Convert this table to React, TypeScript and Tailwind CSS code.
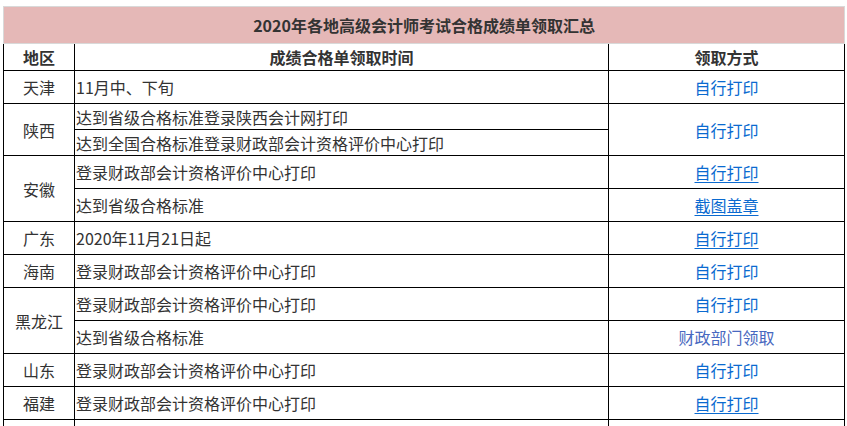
import React from "react";

type Way = { text: string; underline?: boolean; muted?: boolean };
type Sub = { time: string; way?: Way; h: number };
type Region = { name: string; subs: Sub[]; way?: Way };

const data: Region[] = [
  { name: "天津", subs: [{ time: "11月中、下旬", way: { text: "自行打印" }, h: 33 }] },
  {
    name: "陕西",
    way: { text: "自行打印" },
    subs: [
      { time: "达到省级合格标准登录陕西会计网打印", h: 26 },
      { time: "达到全国合格标准登录财政部会计资格评价中心打印", h: 26 },
    ],
  },
  {
    name: "安徽",
    subs: [
      { time: "登录财政部会计资格评价中心打印", way: { text: "自行打印", underline: true }, h: 33 },
      { time: "达到省级合格标准", way: { text: "截图盖章", underline: true }, h: 33 },
    ],
  },
  { name: "广东", subs: [{ time: "2020年11月21日起", way: { text: "自行打印", underline: true }, h: 33 }] },
  { name: "海南", subs: [{ time: "登录财政部会计资格评价中心打印", way: { text: "自行打印" }, h: 33 }] },
  {
    name: "黑龙江",
    subs: [
      { time: "登录财政部会计资格评价中心打印", way: { text: "自行打印" }, h: 33 },
      { time: "达到省级合格标准", way: { text: "财政部门领取", muted: true }, h: 33 },
    ],
  },
  { name: "山东", subs: [{ time: "登录财政部会计资格评价中心打印", way: { text: "自行打印" }, h: 33 }] },
  { name: "福建", subs: [{ time: "登录财政部会计资格评价中心打印", way: { text: "自行打印", underline: true }, h: 33 }] },
  { name: "", subs: [{ time: "", way: { text: "" }, h: 33 }] },
];

const cell = "border border-black p-0 align-middle";

const WayText = ({ way }: { way: Way }) => (
  <span
    className={`${way.muted ? "text-[#4868c0]" : "text-[#0a6ad0]"} ${
      way.underline ? "underline underline-offset-[3px]" : ""
    }`}
  >
    {way.text}
  </span>
);

export default function App() {
  return (
    <div
      className="bg-white w-[847px] h-[426px] overflow-hidden pt-[6px] pl-[3px] text-[16px] leading-none text-[#333]"
      style={{ fontFamily: '"Noto Sans CJK SC", "Microsoft YaHei", sans-serif' }}
    >
      <table className="border-collapse table-fixed w-[841px]">
        <colgroup>
          <col className="w-[71px]" />
          <col className="w-[534px]" />
          <col className="w-[236px]" />
        </colgroup>
        <tbody>
          <tr>
            <td
              colSpan={3}
              className="border border-[#d9d9d9] bg-[#e5b8b7] h-[37px] text-center font-bold text-[16px] p-0 pb-[1px]"
            >
              2020年各地高级会计师考试合格成绩单领取汇总
            </td>
          </tr>
          <tr>
            <td className={`${cell} h-[27px] text-center font-bold`}>地区</td>
            <td className={`${cell} text-center font-bold`}>成绩合格单领取时间</td>
            <td className={`${cell} text-center font-bold`}>领取方式</td>
          </tr>
          {data.map((r, ri) =>
            r.subs.map((s, si) => (
              <tr key={`${ri}-${si}`}>
                {si === 0 && (
                  <td rowSpan={r.subs.length} className={`${cell} text-center`}>
                    {r.name}
                  </td>
                )}
                <td className={`${cell} pl-[1px]`} style={{ height: s.h }}>
                  {s.time}
                </td>
                {s.way ? (
                  <td className={`${cell} text-center`}>
                    <WayText way={s.way} />
                  </td>
                ) : (
                  si === 0 &&
                  r.way && (
                    <td rowSpan={r.subs.length} className={`${cell} text-center`}>
                      <WayText way={r.way} />
                    </td>
                  )
                )}
              </tr>
            ))
          )}
        </tbody>
      </table>
    </div>
  );
}
